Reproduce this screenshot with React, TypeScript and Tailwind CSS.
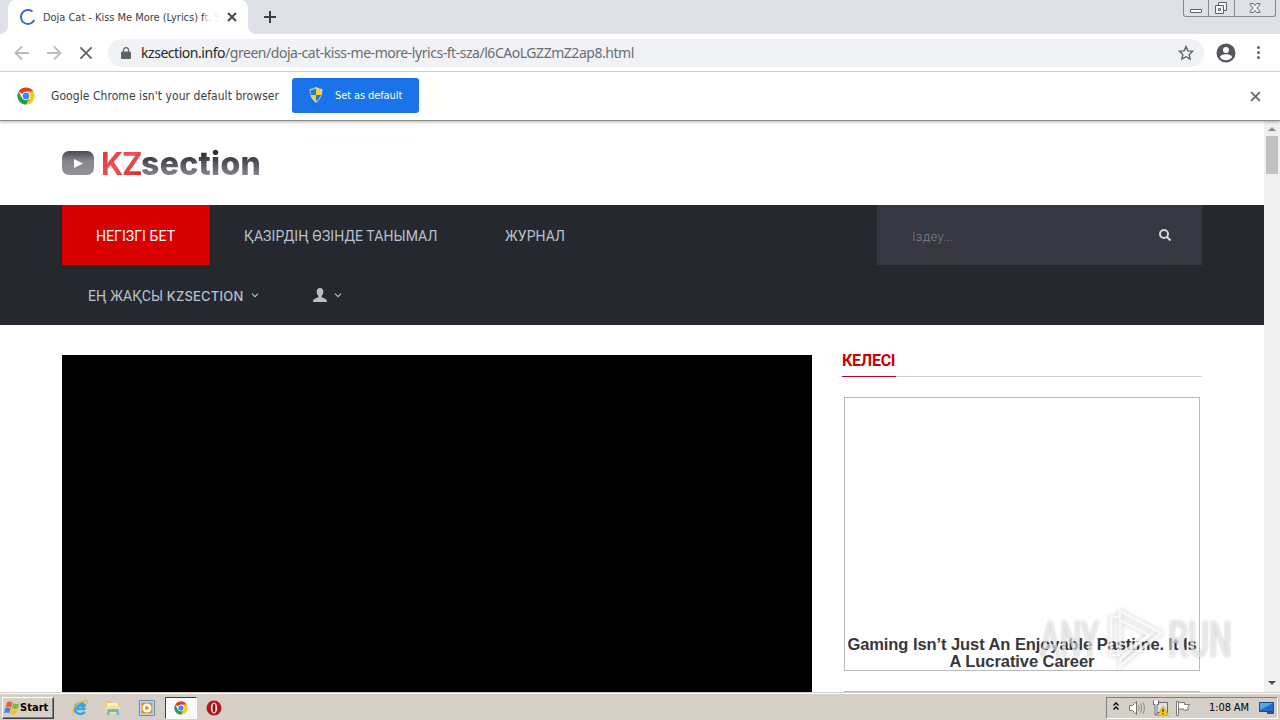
import type { ReactNode } from "react"

const WIN_FONT = "font-['DejaVu_Sans_Condensed','DejaVu_Sans',sans-serif] [font-stretch:condensed]"

function ChromeLogo({ className }: { className?: string }) {
    return (
        <svg viewBox="0 0 48 48" className={className}>
            <circle cx="24" cy="24" r="23" fill="#fff" />
            <path d="M24 24 4.1 12.5A23 23 0 0 1 43.9 12.5H24Z" fill="#df3b2f" />
            <path d="M43.9 12.5A23 23 0 0 1 24 47L34 29.8 34 18.2 24 12.5Z" fill="#fbc916" />
            <path d="M4.1 12.5A23 23 0 0 0 24 47L34 29.8 24 35.5 14 29.8Z" fill="#279a4b" />
            <circle cx="24" cy="24" r="11.5" fill="#fff" />
            <circle cx="24" cy="24" r="9" fill="#4285f4" />
        </svg>
    )
}

function CloseIcon({ className }: { className?: string }) {
    return (
        <svg viewBox="0 0 10 10" className={className} fill="none" stroke="currentColor">
            <path d="M1 1 9 9M9 1 1 9" />
        </svg>
    )
}

function TabStrip() {
    return (
        <div className="flex h-[34px] shrink-0 items-end bg-[#dee1e8]">
            <svg viewBox="0 0 8 8" className="h-2 w-2" fill="#fff">
                <path d="M8 0V8H0A8 8 0 0 0 8 0Z" />
            </svg>
            <div className="flex h-[34px] w-[240px] items-center rounded-t-lg bg-white pl-3">
                <svg viewBox="0 0 16 16" className="h-4 w-4 shrink-0" fill="none" stroke="#3c6fc4" strokeWidth="2">
                    <path d="M12.500 2.600A7 7 0 1 0 14.300 11" />
                </svg>
                <div className="relative ml-[7px] w-[177px] overflow-hidden pt-px text-[11px] leading-4 tracking-[-0.03px] whitespace-nowrap text-[#3c4043]">
                    Doja Cat - Kiss Me More (Lyrics) ft. S
                    <span className="absolute inset-y-0 right-0 w-4 bg-linear-to-r from-white/50 to-white" />
                </div>
                <CloseIcon className="ml-[7px] h-[10px] w-[10px] stroke-2 text-[#45484c]" />
            </div>
            <svg viewBox="0 0 8 8" className="h-2 w-2" fill="#fff">
                <path d="M0 0V8H8A8 8 0 0 1 0 0Z" />
            </svg>
            <svg viewBox="0 0 12 12" className="mb-[11px] ml-2 h-3 w-3" stroke="#3c4043" strokeWidth="2">
                <path d="M6 0V12M0 6H12" />
            </svg>
            <div className="mr-1 ml-auto flex h-[17px] self-start rounded-b-[3px] border border-t-0 border-[#85888f] text-[#5c6067]">
                <div className="flex w-[25px] items-end justify-center border-r border-[#85888f] pb-[3px]">
                    <span className="h-1 w-3 rounded-[1px] border border-[#5c6067] bg-white" />
                </div>
                <svg viewBox="0 0 25 16" className="h-4 w-[25px]" fill="#f7f8fa" stroke="currentColor">
                    <path d="M9.500 2.500h8v8h-8z" />
                    <path d="M6.500 5.500h8v8h-8z" />
                    <path d="M9.500 8.500h2v2h-2z" />
                </svg>
                <svg viewBox="0 0 41 16" className="h-4 w-[41px] border-l border-[#85888f]" fill="#f7f8fa" stroke="currentColor">
                    <path d="M15.500 3.500h3.500l1.500 2 1.500-2h3.500v1l-3 3.500 3 3.500v1H22l-1.500-2-1.500 2h-3.500v-1l3-3.500-3-3.500z" />
                </svg>
            </div>
        </div>
    )
}

function Toolbar() {
    return (
        <div className="flex h-[38px] shrink-0 items-center border-b border-[#dbdcde] bg-white pl-[14px]">
            <svg viewBox="0 0 16 16" className="h-4 w-4" fill="none" stroke="#b9bbbe" strokeWidth="1.800">
                <path d="M15 8H2M8 1.500 1.500 8 8 14.500" />
            </svg>
            <svg viewBox="0 0 16 16" className="ml-4 h-4 w-4" fill="none" stroke="#b9bbbe" strokeWidth="1.800">
                <path d="M1 8H14M8 1.500 14.500 8 8 14.500" />
            </svg>
            <CloseIcon className="ml-[17px] h-[14px] w-[14px] stroke-[1.3] text-[#5f6368]" />
            <div className="ml-[15px] flex h-7 w-[1096px] items-center rounded-full bg-[#f0f2f5] pr-[10px] pl-[13px]">
                <svg viewBox="0 0 10 12" className="h-3 w-[10px]">
                    <path d="M1 4.500h8q1 0 1 1V11q0 1-1 1H1q-1 0-1-1V5.500q0-1 1-1Z" fill="#5f6368" />
                    <path d="M2.500 5V3a2.500 2.300 0 0 1 5 0V5" fill="none" stroke="#5f6368" strokeWidth="1.200" />
                </svg>
                <span className="ml-[10px] font-['Noto_Sans','Open_Sans',sans-serif] text-[14px] tracking-[-0.46px] whitespace-nowrap text-[#6a6e73] [font-stretch:normal]">
                    <span className="text-[#26282b]">kzsection.info</span>
                    /green/doja-cat-kiss-me-more-lyrics-ft-sza/l6CAoLGZZmZ2ap8.html
                </span>
                <svg viewBox="0 0 16 16" className="ml-auto h-4 w-4" fill="none" stroke="#5f6368" strokeWidth="1.400">
                    <path d="m8 1.600 1.900 4.300 4.700.5-3.500 3.100 1 4.600L8 11.700l-4.100 2.400 1-4.600L1.400 6.400l4.700-.5Z" />
                </svg>
            </div>
            <svg viewBox="0 0 20 20" className="ml-3 h-5 w-5">
                <circle cx="10" cy="10" r="9.500" fill="#54575c" />
                <circle cx="10" cy="7" r="3" fill="#fff" />
                <path d="M4 14.200c0-4 12-4 12 0a7.500 7.500 0 0 1-12 0Z" fill="#fff" />
            </svg>
            <div className="ml-[21px] flex w-[3px] flex-col gap-[2px]">
                <i className="h-[3px] rounded-full bg-[#5f6368]" />
                <i className="h-[3px] rounded-full bg-[#5f6368]" />
                <i className="h-[3px] rounded-full bg-[#5f6368]" />
            </div>
        </div>
    )
}

function ShieldIcon() {
    return (
        <svg viewBox="0 0 16 16" className="h-4 w-4">
            <path d="M8 0q3.500 2 6.500 2 0 9-6.500 14Q1.500 11 1.500 2 4.500 2 8 0Z" fill="#cfd6dd" />
            <path d="M8 1.500V8H3Q2.400 5.500 2.500 3 5.500 2.800 8 1.500Z" fill="#2f78c8" />
            <path d="M8 1.500V8h5q.6-2.500.5-5Q10.500 2.800 8 1.500Z" fill="#f6d030" />
            <path d="M3 8h5v6.500Q4.300 12 3 8Z" fill="#f6d030" />
            <path d="M13 8H8v6.500Q11.700 12 13 8Z" fill="#2f78c8" />
        </svg>
    )
}

function InfoBar() {
    return (
        <div className="z-10 flex h-[49px] shrink-0 items-center border-b border-[#8b8b8b] bg-white pl-[17px] shadow-[0_1px_3px_rgba(0,0,0,0.3)]">
            <ChromeLogo className="h-[18px] w-[18px]" />
            <span className="ml-4 w-[241px] text-[12px] tracking-[0.06px] whitespace-nowrap text-[#3c4043]">
                Google Chrome isn't your default browser
            </span>
            <div className="mb-[2px] flex h-[35px] w-[127px] items-center rounded-[3px] bg-[#1a73e8] pl-4 text-[11px] tracking-[-0.1px] text-white">
                <ShieldIcon />
                <span className="ml-[11px] pt-[2px] whitespace-nowrap">Set as default</span>
            </div>
            <CloseIcon className="mr-[19px] ml-auto h-[11px] w-[11px] stroke-[1.8] text-[#6b6e72]" />
        </div>
    )
}

function Chevron() {
    return (
        <svg viewBox="0 0 8 5" className="h-[5px] w-2" fill="none" stroke="#b5bfc8" strokeWidth="1.200">
            <path d="M1 .7 4 3.700 7 .7" />
        </svg>
    )
}

function NavItem({ className, children }: { className: string; children: ReactNode }) {
    return <div className={`flex h-[60px] items-center whitespace-nowrap ${className}`}>{children}</div>
}

function SiteHeader() {
    return (
        <>
            <div className="flex h-[84px] shrink-0 items-center pl-[62px]">
                <div className="flex h-[24px] w-8 items-center justify-center rounded-[7px] bg-linear-to-b from-[#4a4a50] via-[#85858b] via-40% to-[#929298]">
                    <svg viewBox="0 0 10 9" className="h-[9px] w-[10px]" fill="#fff">
                        <path d="M1 0 10 4.500 1 9Z" />
                    </svg>
                </div>
                <div className="ml-[7px] pt-[2px] font-['Inter',sans-serif] text-[31px] leading-[40px] font-bold">
                    <span className="bg-linear-to-br from-[#d92c32] via-[#ed5057] to-[#c9262b] bg-clip-text tracking-[-1.4px] text-transparent">KZ</span>
                    <span className="bg-linear-to-b from-[#303037] from-25% to-[#8e8e96] to-85% bg-clip-text text-[32px] font-extrabold tracking-[0.3px] text-transparent">section</span>
                </div>
            </div>
            <div className="flex h-[120px] shrink-0 border-b-2 border-[#2d2632] bg-[#262830] pl-[62px] font-['Roboto',sans-serif] text-[14px] tracking-[0.08px] text-[#b8c3cc]">
                <div className="w-[815px]">
                    <div className="flex">
                        <NavItem className="w-[148px] bg-[#d80000] pt-[2px] pl-[34px] text-white">НЕГІЗГІ БЕТ</NavItem>
                        <NavItem className="w-[261px] pt-[2px] pl-[34px]">ҚАЗІРДІҢ ӨЗІНДЕ ТАНЫМАЛ</NavItem>
                        <NavItem className="pt-[2px] pl-[34px]">ЖУРНАЛ</NavItem>
                    </div>
                    <div className="flex">
                        <NavItem className="w-[225px] gap-[7px] pl-[26px]">
                            <span className="w-[156px] pt-[2px]">
                                ЕҢ ЖАҚСЫ{" "}
                                <span className="font-['Inter',sans-serif] text-[13px] font-medium tracking-[0.2px]">KZSECTION</span>
                            </span>
                            <Chevron />
                        </NavItem>
                        <NavItem className="gap-[7px] pl-[26px]">
                            <svg viewBox="0 0 14 14" className="h-[14px] w-[14px]" fill="#b5c0c9">
                                <path d="M7 0c2.500 0 3.500 1.700 3.300 4C10.200 5.900 9.500 7 8.700 7.800c-.4.900 0 1.700 1 2C12 10.600 14 11 14 14H0c0-3 2-3.400 4.300-4.200 1-.3 1.400-1.100 1-2C4.500 7 3.800 5.900 3.700 4 3.500 1.700 4.500 0 7 0Z" />
                            </svg>
                            <Chevron />
                        </NavItem>
                    </div>
                </div>
                <div className="flex h-[60px] w-[325px] items-center justify-between bg-[#363740] pr-[31px] pl-[35px]">
                    <span className="pt-[3px] text-[13px] font-light tracking-[0.35px] text-[#81838c]">Іздеу...</span>
                    <svg viewBox="0 0 12 12" className="h-3 w-3" fill="none" stroke="#d5d8dd" strokeWidth="2">
                        <circle cx="5" cy="5" r="4" />
                        <path d="m8 8 3.500 3.500" />
                    </svg>
                </div>
            </div>
        </>
    )
}

function SiteBody() {
    return (
        <div className="flex min-h-0 flex-1 gap-[30px] overflow-hidden pt-[30px] pl-[62px]">
            <div className="w-[750px] bg-black" />
            <div className="w-[360px]">
                <div className="flex h-[22px] border-b border-[#d2d2d2]">
                    <h2 className="h-[22px] w-[54px] border-b border-[#c00020] font-['Roboto',sans-serif] text-[16px] leading-[12px] font-bold tracking-[-0.25px] whitespace-nowrap text-[#c80000]">КЕЛЕСІ</h2>
                </div>
                <div className="mx-[2px] mt-5 flex h-[274px] flex-col justify-end border border-[#b9b9b9] text-center font-['Liberation_Sans',Arial,sans-serif] text-[16.5px] leading-[17px] font-bold tracking-[-0.07px] text-[#38383b]">
                    <span className="whitespace-nowrap">Gaming Isn’t Just An Enjoyable Pastime. It Is</span>
                    <span>A Lucrative Career</span>
                </div>
                <div className="mx-[2px] mt-5 h-10 border border-[#b9b9b9]" />
            </div>
        </div>
    )
}

function Scrollbar() {
    return (
        <div className="flex w-4 shrink-0 flex-col items-center bg-[#f0f0f0] pt-[6px] pb-[7px]">
            <svg viewBox="0 0 8 4" className="h-1 w-2" fill="#8c8c8c">
                <path d="M0 4 4 0 8 4Z" />
            </svg>
            <div className="mt-[5px] h-[38px] w-3 bg-[#c1c1c1]" />
            <svg viewBox="0 0 8 4" className="mt-auto h-1 w-2" fill="#505050">
                <path d="M0 0 4 4 8 0Z" />
            </svg>
        </div>
    )
}

function Taskbar() {
    return (
        <div className="flex h-7 shrink-0 items-center border-t border-[#d4d0c8] bg-[#d6cfc8] pt-[2px] shadow-[inset_0_1px_0_#fff]">
            <div className="ml-[2px] flex h-[22px] w-[52px] items-center border border-t-white border-r-[#404040] border-b-[#404040] border-l-white pl-[1px] text-[11px] font-bold tracking-[0.05px] text-black shadow-[inset_-1px_-1px_0_#808080]">
                <svg viewBox="0 0 16 16" className="h-4 w-4 shrink-0">
                    <path d="M3 2.500Q6 .5 8.500 2.500L7 7.500Q4.500 5.800 1.500 7.500Z" fill="#e8602c" />
                    <path d="M9.300 3Q12 5 15.300 3.200L13.800 8.200Q10.800 9.800 7.800 7.900Z" fill="#7cb93e" />
                    <path d="M1.200 8.300Q4 6.600 6.800 8.300L5.300 13.300Q2.800 11.800 0 13.300Z" fill="#3f8bd9" />
                    <path d="M7.500 8.800Q10.500 10.500 13.500 9L12 14Q9 15.500 6 13.800Z" fill="#f7bd2c" />
                </svg>
                <span className="pt-px">Start</span>
            </div>
            <svg viewBox="0 0 18 18" className="ml-[17px] h-[18px] w-[18px]" fill="none">
                <path d="M14.500 10H5.500C5.500 5.500 12.500 5.500 12.500 9M14 13C9 17 3.500 14 3.800 9.500 4 4 12 2 14.500 7.500" stroke="#39a5dc" strokeWidth="2.400" />
                <path d="M2 15.500C-1 11 8 2 14.500 1.500 17 1.500 17 3 16 5" stroke="#eebb3c" strokeWidth="1.300" />
            </svg>
            <svg viewBox="0 0 18 18" className="ml-[15px] h-[18px] w-[18px]">
                <path d="M2 2h5l1 2h7v10H2Z" fill="#e6c260" />
                <path d="M3 4h11v3H3Z" fill="#f8f3d2" />
                <path d="M1 7h15l-1 8H2Z" fill="#f5df90" />
                <path d="M3 16v-4q0-2 2-2h8q2 0 2 2v4h-2.500v-3h-7v3Z" fill="#6cb5dd" />
            </svg>
            <svg viewBox="0 0 16 16" className="ml-[17px] h-4 w-4">
                <path d="M.5.500h15v15H.5z" fill="#b9dbef" stroke="#4f94c4" />
                <path d="M2.500 2.500h11v11h-11z" fill="#f38b1c" />
                <circle cx="8" cy="8" r="4.500" fill="#fff" />
                <path d="M6.500 5.500 10.500 8 6.500 10.500Z" fill="#f07b10" />
            </svg>
            <div className="ml-[10px] flex h-[22px] w-8 items-center justify-center border border-t-[#404040] border-r-white border-b-white border-l-[#404040] bg-[#fbfaf9]">
                <ChromeLogo className="h-[14px] w-[14px]" />
            </div>
            <svg viewBox="0 0 16 16" className="ml-[9px] h-4 w-4">
                <circle cx="8" cy="8" r="7.500" fill="#b3151d" />
                <ellipse cx="8" cy="8" rx="3.200" ry="5.500" fill="#f3dfe0" />
                <ellipse cx="8" cy="8" rx="1.400" ry="4.600" fill="#8b1017" />
            </svg>
            <div className="mr-[2px] ml-auto flex h-[22px] w-[172px] items-center border border-t-[#808080] border-r-white border-b-white border-l-[#808080] pl-[6px] text-black">
                <svg viewBox="0 0 6 8" className="mb-1 h-2 w-[6px]" fill="none" stroke="#000" strokeWidth="1.300">
                    <path d="M.5 3.500 3 1 5.500 3.500M.5 7.500 3 5 5.500 7.500" />
                </svg>
                <svg viewBox="0 0 18 16" className="ml-[9px] h-4 w-[18px]" fill="none" stroke="#8a8a8a">
                    <path d="M1.500 5.500h3l4-4v13l-4-4h-3z" fill="#fff" stroke="#77777a" />
                    <path d="M10.500 5.500q1.500 2.500 0 5M12.500 3.500q3 4.500 0 9M14.500 2q4 6 0 12" />
                </svg>
                <svg viewBox="0 0 17 16" className="ml-[6px] h-4 w-[17px]">
                    <path d="M4.500 2.500h11v10h-11z" fill="#dfe1e4" stroke="#66696e" />
                    <path d="M1.500.500v4h1.500V15h2V4.500h1.500v-4" fill="#fff" stroke="#66696e" />
                    <path d="m11 6 5.500 9.500h-11Z" fill="#f5cc1b" stroke="#c49a0c" strokeWidth=".6" />
                    <path d="M11 9v3M11 13v1.200" stroke="#222" strokeWidth="1.200" />
                </svg>
                <svg viewBox="0 0 16 16" className="ml-[6px] h-4 w-4" fill="#fff" stroke="#7b7b7d">
                    <path d="M1.500 15.500v-14h2v14z" />
                    <path d="M3.500 2.500h6v2h5l-2 3 1 2.500h-5v-1h-5z" />
                </svg>
                <span className="ml-[18px] w-[41px] pt-px text-[11px] tracking-[-0.1px] whitespace-nowrap">1:08 AM</span>
                <svg viewBox="0 0 16 14" className="ml-[9px] h-[14px] w-4">
                    <path d="M.5 1.500h14v9H.5z" fill="#1f6bd0" stroke="#184a8c" />
                    <path d="M1 2h13L1 9Z" fill="#5da4ee" />
                    <path d="M8 10.500h7v2.500H8Z" fill="#39516f" />
                </svg>
            </div>
        </div>
    )
}

function Watermark() {
    return (
        <div className="absolute top-[606px] left-[1040px] flex h-[68px] w-[196px] items-center font-['Roboto',sans-serif] text-[50px] leading-none text-white/60 [font-stretch:normal] [text-shadow:0_0_3px_rgba(0,0,0,0.28)]">
            <span className="w-[66px] origin-left scale-x-[0.6] font-medium">ANY</span>
            <svg viewBox="0 0 58 64" className="h-16 w-[58px] shrink-0 drop-shadow-[0_0_2px_rgba(0,0,0,0.28)]" fill="none" stroke="#fff" strokeOpacity=".75" strokeWidth="3">
                <path d="M14 42V3L55 25 14 58V51L43 27 14 12" />
                <path d="M14 9H5V47H14M20 42 43 28" />
            </svg>
            <span className="ml-[4px] w-[64px] origin-left scale-x-[0.64] font-medium">RUN</span>
        </div>
    )
}

export default function App() {
    return (
        <div className={`relative flex h-[720px] w-[1280px] flex-col overflow-hidden bg-white ${WIN_FONT}`}>
            <TabStrip />
            <Toolbar />
            <InfoBar />
            <div className="flex min-h-0 flex-1 [font-stretch:normal]">
                <div className="flex min-w-0 flex-1 flex-col">
                    <SiteHeader />
                    <SiteBody />
                </div>
                <Scrollbar />
            </div>
            <Taskbar />
            <Watermark />
        </div>
    )
}
